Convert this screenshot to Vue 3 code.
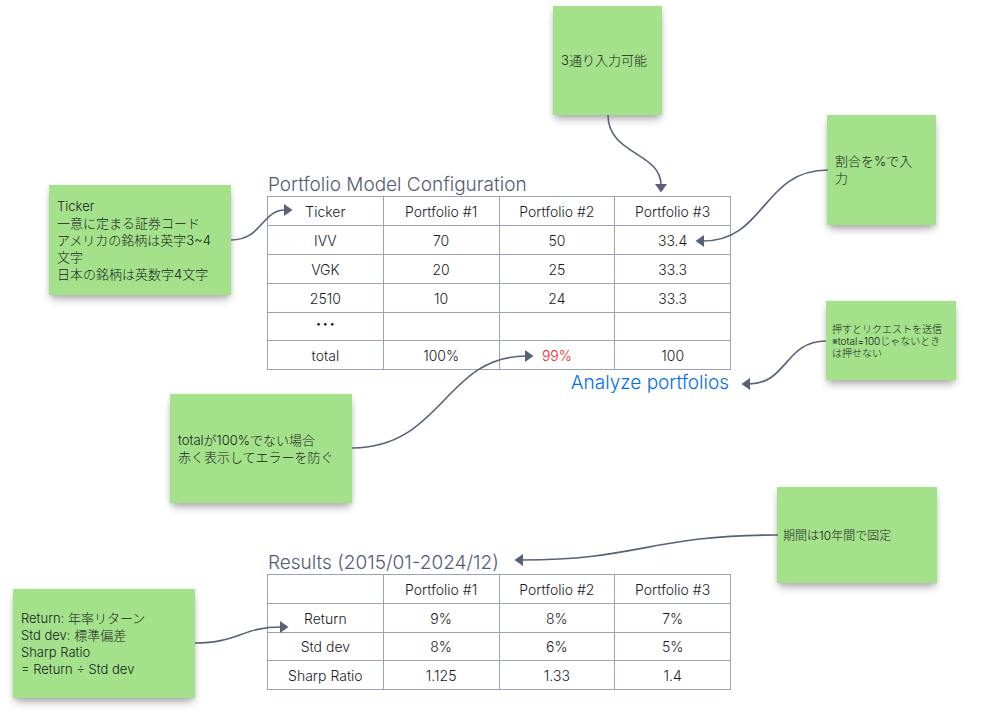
<script setup>
const config = {
  head: ['Ticker', 'Portfolio #1', 'Portfolio #2', 'Portfolio #3'],
  rows: [
    ['IVV', '70', '50', '33.4'],
    ['VGK', '20', '25', '33.3'],
    ['2510', '10', '24', '33.3'],
    ['･･･', '', '', ''],
    ['total', '100%', '99%', '100'],
  ],
}

const results = {
  head: ['', 'Portfolio #1', 'Portfolio #2', 'Portfolio #3'],
  rows: [
    ['Return', '9%', '8%', '7%'],
    ['Std dev', '8%', '6%', '5%'],
    ['Sharp Ratio', '1.125', '1.33', '1.4'],
  ],
}

const notes = [
  { id: 'inputs', lines: ['3通り入力可能'] },
  { id: 'percent', lines: ['割合を%で入', '力'] },
  {
    id: 'ticker',
    lines: ['Ticker', '一意に定まる証券コード', 'アメリカの銘柄は英字3~4', '文字', '日本の銘柄は英数字4文字'],
  },
  { id: 'submit', lines: ['押すとリクエストを送信', '※total=100じゃないとき', 'は押せない'] },
  { id: 'error', lines: ['totalが100%でない場合', '赤く表示してエラーを防ぐ'] },
  { id: 'period', lines: ['期間は10年間で固定'] },
  {
    id: 'metrics',
    lines: ['Return: 年率リターン', 'Std dev: 標準偏差', 'Sharp Ratio', '= Return ÷ Std dev'],
  },
]

const connectors = [
  'M608 115 C608 155 661 152 661 185',
  'M828 170 C762 170 766 241 703 241',
  'M231 240 C262 240 262 210 285 210',
  'M826 341 C785 341 787 384 749 384',
  'M352 448 C442 448 445 356 526 356',
  'M778 535 C650 535 640 560 522 560',
  'M195 643 C238 643 242 627 281 627',
]
</script>

<template>
  <main class="canvas">
    <section class="frame frame-config">
      <h2 class="title">Portfolio Model Configuration</h2>
      <table class="grid">
        <thead>
          <tr>
            <th v-for="h in config.head" :key="h" scope="col">{{ h }}</th>
          </tr>
        </thead>
        <tbody>
          <tr v-for="row in config.rows" :key="row[0]">
            <td v-for="(cell, i) in row" :key="i" :class="{ error: cell === '99%', more: cell === '･･･' }">{{ cell }}</td>
          </tr>
        </tbody>
      </table>
      <button type="button" class="analyze">Analyze portfolios</button>
    </section>

    <section class="frame frame-results">
      <h2 class="title">Results (2015/01-2024/12)</h2>
      <table class="grid">
        <thead>
          <tr>
            <th v-for="h in results.head" :key="h" scope="col">{{ h }}</th>
          </tr>
        </thead>
        <tbody>
          <tr v-for="row in results.rows" :key="row[0]">
            <td v-for="(cell, i) in row" :key="i">{{ cell }}</td>
          </tr>
        </tbody>
      </table>
    </section>

    <aside v-for="note in notes" :key="note.id" class="note" :class="'note-' + note.id">
      <p v-for="line in note.lines" :key="line">{{ line }}</p>
    </aside>

    <svg class="connectors" aria-hidden="true">
      <defs>
        <marker id="head" markerUnits="userSpaceOnUse" markerWidth="9" markerHeight="12" refX="1" refY="6" orient="auto">
          <path d="M0 0 L8.5 6 L0 12 Z" fill="#586178" />
        </marker>
      </defs>
      <path v-for="d in connectors" :key="d" :d="d" marker-end="url(#head)" />
    </svg>
  </main>
</template>

<style>
body {
  margin: 0;
  background: #fff;
}
</style>

<style scoped>
.canvas {
  position: relative;
  min-height: 100vh;
  overflow: hidden;
  background: #fff;
  color: #1a1a24;
  font-family: Inter, "Noto Sans CJK JP", sans-serif;
  font-size: 13px;
  font-weight: 300;
  line-height: 17px;
}

.frame {
  position: absolute;
  display: flex;
  flex-direction: column;
  width: 464px;
}

.frame-config {
  left: 267px;
  top: 174px;
}

.frame-results {
  left: 267px;
  top: 552px;
}

.title {
  margin: 0;
  padding-left: 1px;
  color: #535b73;
  font-size: 19px;
  font-weight: 300;
  line-height: 22px;
}

.grid {
  width: 100%;
  table-layout: fixed;
  border-collapse: collapse;
  font-size: 14px;
}

.grid tr {
  height: 29px;
}

.grid tbody tr:nth-last-child(2) {
  height: 28px;
}

.grid th,
.grid td {
  padding: 0;
  border: 1px solid #9ba2b5;
  font-weight: 300;
  text-align: center;
}

.grid .error {
  color: #f5281c;
}

.grid .more {
  padding-bottom: 6px;
  font-weight: 700;
}

.analyze {
  align-self: flex-end;
  margin: 0;
  padding: 0 2px;
  border: 0;
  background: none;
  color: #006ef5;
  font: inherit;
  font-size: 19px;
  line-height: 26px;
  cursor: pointer;
}

.note {
  position: absolute;
  display: flex;
  flex-direction: column;
  justify-content: center;
  box-sizing: border-box;
  padding: 0 8px;
  background: #a3e28a;
  box-shadow: 0 6px 8px -2px rgba(0, 0, 0, 0.3), 0 1px 5px rgba(0, 0, 0, 0.1);
  white-space: nowrap;
}

.note p {
  margin: 0;
}

.note-inputs {
  left: 553px;
  top: 6px;
  width: 109px;
  height: 109px;
}

.note-percent {
  left: 827px;
  top: 115px;
  width: 109px;
  height: 110px;
}

.note-ticker {
  left: 49px;
  top: 185px;
  width: 182px;
  height: 110px;
}

.note-submit {
  left: 826px;
  top: 301px;
  width: 130px;
  height: 79px;
  padding: 0 6px;
  font-size: 10px;
  line-height: 12px;
}

.note-error {
  left: 170px;
  top: 394px;
  width: 182px;
  height: 109px;
}

.note-period {
  left: 777px;
  top: 487px;
  width: 160px;
  height: 96px;
  padding: 0 6px;
  font-size: 12px;
}

.note-metrics {
  left: 13px;
  top: 589px;
  width: 182px;
  height: 109px;
}

.connectors {
  position: absolute;
  inset: 0;
  width: 100%;
  height: 100%;
  overflow: visible;
  pointer-events: none;
}

.connectors > path {
  fill: none;
  stroke: #586178;
  stroke-width: 1.6;
}
</style>
